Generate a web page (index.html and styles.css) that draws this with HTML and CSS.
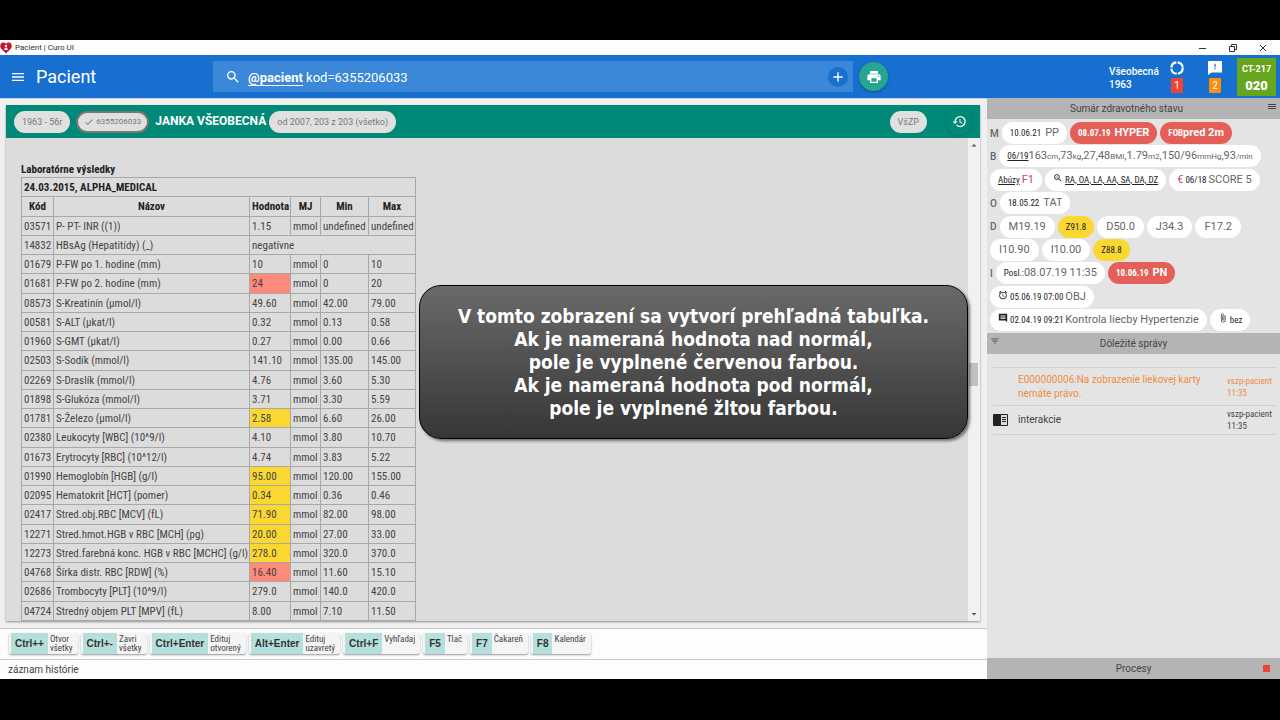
FILE: index.html
```html
<!DOCTYPE html>
<html lang="sk">
<head>
  <meta charset="UTF-8"/>
  <meta name="viewport" content="width=device-width, initial-scale=1.0"/>
  <title>Pacient | Curo UI</title>
  <link rel="stylesheet" href="styles.css">
</head>
<body>
  <div class="window">
    <div class="titlebar">
      <svg class="logo" viewBox="0 0 12 12"><path d="M6 11.6 1 6.4C-.6 4.300.2.8 3.200.6 4.500.5 5.500 1.200 6 2c.5-.8 1.500-1.500 2.800-1.400 3 .2 3.800 3.700 2.200 5.800z" fill="#c2182b"/><circle cx="6" cy="4" r="1.200" fill="#fff"/><path d="M4.300 8c0-3.300 3.400-3.300 3.400 0z" fill="#fff"/></svg>
      <span>Pacient | Curo UI</span>
      <div class="win-buttons">
        <button aria-label="Minimalizovať"><svg viewBox="0 0 10 10"><path d="M1 5.500h7"/></svg></button>
        <button aria-label="Obnoviť"><svg viewBox="0 0 10 10"><path d="M1.500 3.500h5v5h-5zM3.500 3.500v-2h5v5h-2"/></svg></button>
        <button aria-label="Zavrieť"><svg viewBox="0 0 10 10"><path d="m2 2 6 6M8 2 2 8"/></svg></button>
      </div>
    </div>

    <header class="topbar">
      <button class="menu" aria-label="Menu"><svg viewBox="0 0 24 24"><path d="M3 18h18v-2H3v2zm0-5h18v-2H3v2zm0-7v2h18V6H3z"/></svg></button>
      <h1>Pacient</h1>
      <div class="search">
        <svg viewBox="0 0 24 24"><path d="M15.500 14h-.79l-.28-.27A6.470 6.470 0 0 0 16 9.500 6.500 6.500 0 1 0 9.500 16c1.610 0 3.090-.59 4.230-1.570l.27.28v.79l5 4.990L20.490 19l-4.990-5zm-6 0C7.010 14 5 11.990 5 9.500S7.010 5 9.500 5 14 7.010 14 9.500 11.990 14 9.500 14z"/></svg>
        <div class="query" role="textbox" contenteditable="true" aria-label="Hľadať"><b>@pacient</b> kod=6355206033</div>
        <button class="add" aria-label="Pridať"><svg viewBox="0 0 24 24"><path d="M19 13h-6v6h-2v-6H5v-2h6V5h2v6h6v2z"/></svg></button>
      </div>
      <button class="print" aria-label="Tlačiť"><svg viewBox="0 0 24 24"><path d="M19 8H5c-1.660 0-3 1.340-3 3v6h4v4h12v-4h4v-6c0-1.660-1.340-3-3-3zm-3 11H8v-5h8v5zm3-7c-.55 0-1-.45-1-1s.45-1 1-1 1 .45 1 1-.45 1-1 1zm-1-9H6v4h12V3z"/></svg></button>
      <div class="user">
        <div class="who">Všeobecná<br>1963</div>
        <div class="counter">
          <svg viewBox="0 0 16 16"><circle cx="8" cy="8" r="6.500" fill="none" stroke="#fff" stroke-width="2.500" stroke-dasharray="8.710 1.500" /></svg>
          <span class="badge red">1</span>
        </div>
        <div class="counter">
          <svg viewBox="0 0 16 16"><path d="M0 0h16v13H4l-4 3z"/><path d="M7.300 3h1.400v4H7.300zm0 5h1.400v1.500H7.300z" fill="#1770d0"/></svg>
          <span class="badge orange">2</span>
        </div>
        <div class="ticket">CT-217<strong>020</strong></div>
      </div>
    </header>

    <div class="columns">
      <main>
        <div class="panel">
          <div class="patient">
            <button class="tag">1963 - 56r</button>
            <button class="tag active"><svg viewBox="0 0 24 24"><path d="M9 16.170 4.830 12l-1.420 1.410L9 19 21 7l-1.410-1.410z"/></svg>6355206033</button>
            <h2>JANKA VŠEOBECNÁ</h2>
            <button class="tag">od 2007, 203 z 203 (všetko)</button>
            <button class="tag insurer">VšZP</button>
            <button class="history" aria-label="História"><svg viewBox="0 0 24 24"><path d="M13 3a9 9 0 0 0-9 9H1l3.890 3.890.07.14L9 12H6c0-3.870 3.130-7 7-7s7 3.130 7 7-3.130 7-7 7c-1.930 0-3.680-.79-4.940-2.060l-1.420 1.420A8.954 8.954 0 0 0 13 21a9 9 0 0 0 0-18zm-1 5v5l4.280 2.540.72-1.210-3.500-2.080V8H12z"/></svg></button>
          </div>
          <div class="record">
            <div class="results">
              <h3>Laboratórne výsledky</h3>
              <table>
                <colgroup><col class="c-code"><col class="c-name"><col class="c-value"><col class="c-unit"><col class="c-min"><col class="c-max"></colgroup>
                <tr><th class="lab" colspan="6">24.03.2015, ALPHA_MEDICAL</th></tr>
                <tr><th>Kód</th><th>Názov</th><th>Hodnota</th><th>MJ</th><th>Min</th><th>Max</th></tr>
                <tr><td>03571</td><td>P- PT- INR ((1))</td><td>1.15</td><td>mmol</td><td>undefined</td><td>undefined</td></tr>
                <tr><td>14832</td><td>HBsAg (Hepatitídy) (_)</td><td colspan="4">negatívne</td></tr>
                <tr><td>01679</td><td>P-FW po 1. hodine (mm)</td><td>10</td><td>mmol</td><td>0</td><td>10</td></tr>
                <tr><td>01681</td><td>P-FW po 2. hodine (mm)</td><td class="high">24</td><td>mmol</td><td>0</td><td>20</td></tr>
                <tr><td>08573</td><td>S-Kreatinín (µmol/l)</td><td>49.60</td><td>mmol</td><td>42.00</td><td>79.00</td></tr>
                <tr><td>00581</td><td>S-ALT (µkat/l)</td><td>0.32</td><td>mmol</td><td>0.13</td><td>0.58</td></tr>
                <tr><td>01960</td><td>S-GMT (µkat/l)</td><td>0.27</td><td>mmol</td><td>0.00</td><td>0.66</td></tr>
                <tr><td>02503</td><td>S-Sodík (mmol/l)</td><td>141.10</td><td>mmol</td><td>135.00</td><td>145.00</td></tr>
                <tr><td>02269</td><td>S-Draslík (mmol/l)</td><td>4.76</td><td>mmol</td><td>3.60</td><td>5.30</td></tr>
                <tr><td>01898</td><td>S-Glukóza (mmol/l)</td><td>3.71</td><td>mmol</td><td>3.30</td><td>5.59</td></tr>
                <tr><td>01781</td><td>S-Železo (µmol/l)</td><td class="low">2.58</td><td>mmol</td><td>6.60</td><td>26.00</td></tr>
                <tr><td>02380</td><td>Leukocyty [WBC] (10^9/l)</td><td>4.10</td><td>mmol</td><td>3.80</td><td>10.70</td></tr>
                <tr><td>01673</td><td>Erytrocyty [RBC] (10^12/l)</td><td>4.74</td><td>mmol</td><td>3.83</td><td>5.22</td></tr>
                <tr><td>01990</td><td>Hemoglobín [HGB] (g/l)</td><td class="low">95.00</td><td>mmol</td><td>120.00</td><td>155.00</td></tr>
                <tr><td>02095</td><td>Hematokrit [HCT] (pomer)</td><td class="low">0.34</td><td>mmol</td><td>0.36</td><td>0.46</td></tr>
                <tr><td>02417</td><td>Stred.obj.RBC [MCV] (fL)</td><td class="low">71.90</td><td>mmol</td><td>82.00</td><td>98.00</td></tr>
                <tr><td>12271</td><td>Stred.hmot.HGB v RBC [MCH] (pg)</td><td class="low">20.00</td><td>mmol</td><td>27.00</td><td>33.00</td></tr>
                <tr><td>12273</td><td>Stred.farebná konc. HGB v RBC [MCHC] (g/l)</td><td class="low">278.0</td><td>mmol</td><td>320.0</td><td>370.0</td></tr>
                <tr><td>04768</td><td>Šírka distr. RBC [RDW] (%)</td><td class="high">16.40</td><td>mmol</td><td>11.60</td><td>15.10</td></tr>
                <tr><td>02686</td><td>Trombocyty [PLT] (10^9/l)</td><td>279.0</td><td>mmol</td><td>140.0</td><td>420.0</td></tr>
                <tr><td>04724</td><td>Stredný objem PLT [MPV] (fL)</td><td>8.00</td><td>mmol</td><td>7.10</td><td>11.50</td></tr>
              </table>
            </div>
            <div class="scrollbar">
              <svg viewBox="0 0 12 12"><path d="M3.500 7.500h5L6 5z"/></svg>
              <div class="track"><div class="thumb"></div></div>
              <svg viewBox="0 0 12 12"><path d="M3.500 5h5L6 7.500z"/></svg>
            </div>
            <div class="callout">
              V tomto zobrazení sa vytvorí prehľadná tabuľka.<br>
              Ak je nameraná hodnota nad normál,<br>
              pole je vyplnené červenou farbou.<br>
              Ak je nameraná hodnota pod normál,<br>
              pole je vyplnené žltou farbou.
            </div>
          </div>
        </div>

        <div class="hotkeys">
          <button><kbd>Ctrl++</kbd><span>Otvor<br>všetky</span></button>
          <button><kbd>Ctrl+-</kbd><span>Zavri<br>všetky</span></button>
          <button><kbd>Ctrl+Enter</kbd><span>Edituj<br>otvorený</span></button>
          <button><kbd>Alt+Enter</kbd><span>Edituj<br>uzavretý</span></button>
          <button><kbd>Ctrl+F</kbd><span>Vyhľadaj</span></button>
          <button><kbd>F5</kbd><span>Tlač</span></button>
          <button><kbd>F7</kbd><span>Čakareň</span></button>
          <button><kbd>F8</kbd><span>Kalendár</span></button>
        </div>
        <div class="statusline">záznam histórie</div>
      </main>

      <aside>
        <div class="side-head with-grip">Sumár zdravotného stavu
          <svg class="grip" viewBox="0 0 10 8"><path d="M1 1h8v1H1zm0 2h8v1H1zm0 2h8v1H1z"/></svg>
        </div>
        <div class="summary">
          <div class="line"><span class="key">M</span>
            <span class="chip dated"><small>10.06.21</small> PP</span>
            <span class="chip dated red"><small>08.07.19</small> HYPER</span>
            <span class="chip red tight"><small>FOB</small>pred 2m</span></div>
          <div class="line"><span class="key">B</span>
            <span class="chip vitals"><small><u>06/19</u></small>163<i>cm</i>,73<i>kg</i>,27,48<i>BMI</i>,1.79<i>m2</i>,150/96<i>mmHg</i>,93<i>/min</i></span></div>
          <div class="line">
            <span class="chip"><small><u>Abúzy</u></small><em>F1</em></span>
            <span class="chip"><svg viewBox="0 0 24 24"><path d="M15.500 14h-.79l-.28-.27A6.470 6.470 0 0 0 16 9.500 6.500 6.500 0 1 0 9.500 16c1.610 0 3.090-.59 4.230-1.570l.27.28v.79l5 4.990L20.490 19l-4.990-5zm-6 0C7.010 14 5 11.990 5 9.500S7.010 5 9.500 5 14 7.010 14 9.500 11.990 14 9.500 14zM7 9h5v1H7z"/></svg><small><u>RA, OA, LA, AA, SA, DA, DZ</u></small></span>
            <span class="chip"><em class="euro">€</em><small>06/18</small>SCORE 5</span></div>
          <div class="line"><span class="key">O</span>
            <span class="chip dated"><small>18.05.22</small> TAT</span></div>
          <div class="line"><span class="key">D</span>
            <span class="chip code">M19.19</span><span class="chip yellow"><small>Z91.8</small></span><span class="chip code">D50.0</span><span class="chip code">J34.3</span><span class="chip code">F17.2</span></div>
          <div class="line">
            <span class="chip code">I10.90</span><span class="chip code">I10.00</span><span class="chip yellow"><small>Z88.8</small></span></div>
          <div class="line"><span class="key">I</span>
            <span class="chip tight"><small>Posl.:</small>08.07.19 11:35</span>
            <span class="chip dated red"><small>10.06.19</small> PN</span></div>
          <div class="line">
            <span class="chip"><svg viewBox="0 0 24 24"><path d="m22 5.720-4.600-3.860-1.290 1.530 4.600 3.860L22 5.720zM7.880 3.390 6.600 1.860 2 5.710l1.290 1.530 4.590-3.850zM12.500 8H11v6l4.750 2.850.75-1.230-4-2.370V8zM12 4a9 9 0 1 0 0 18 9 9 0 0 0 0-18zm0 16a7 7 0 1 1 0-14 7 7 0 0 1 0 14z"/></svg><small>05.06.19 07:00</small> OBJ</span></div>
          <div class="line">
            <span class="chip"><svg viewBox="0 0 24 24"><path d="M2 2h20v20l-4-4H2zm4 4v2h12V6zm0 3v2h12V9zm0 3v2h12v-2z"/></svg><small>02.04.19 09:21</small> Kontrola liecby Hypertenzie</span>
            <span class="chip"><svg viewBox="0 0 24 24"><path d="M16.500 6v11.500a4 4 0 0 1-8 0V5a2.500 2.500 0 0 1 5 0v10.500a1 1 0 0 1-2 0V6H10v9.500a2.500 2.500 0 0 0 5 0V5a4 4 0 0 0-8 0v12.500a5.500 5.500 0 0 0 11 0V6h-1.500z"/></svg><small>bez</small></span></div>
        </div>
        <div class="side-head">Dôležité správy
          <svg class="filter" viewBox="0 0 24 24"><path d="M10 18h4v-2h-4v2zM3 6v2h18V6H3zm3 7h12v-2H6v2z"/></svg>
        </div>
        <ul class="messages">
          <li class="warn"><span class="ico"></span><p>E000000006:Na zobrazenie liekovej karty nemáte právo.</p><span class="from">vszp-pacient<br>11:35</span></li>
          <li><span class="ico"><svg viewBox="0 0 15 12"><rect width="15" height="12" rx="1" fill="#222"/><path d="M8 1h6v10H8z" fill="#ddd"/><path d="M9 3h4v1H9zm0 2h4v1H9zm0 2h4v1H9z" fill="#222"/></svg></span><p>interakcie</p><span class="from">vszp-pacient<br>11:35</span></li>
        </ul>
        <div class="side-head">Procesy <span class="stop"></span></div>
      </aside>
    </div>
  </div>
</body>
</html>
```
FILE: styles.css
```css
* { box-sizing: border-box; margin: 0; padding: 0; }
:root { --blue: #1770d0; --green: #008977; --grey: #b4b4b4; --red: #e45f58; --yellow: #fbd732; }
body {
  background: #000; color: #444;
  font-family: Roboto, sans-serif; font-size: 11px;
  height: 100vh; padding: 40px 0 41px;
}
button { font: inherit; color: inherit; border: none; background: none; cursor: pointer; }
svg { display: block; fill: currentColor; }
.window { height: 100%; display: flex; flex-direction: column; background: #f0f0f0; overflow: hidden; }

.titlebar {
  height: 15px; flex: none; display: flex; align-items: center; gap: 3px;
  background: #fdfdfd; padding-right: 2px;
  font-size: 8px; color: #333;
}
.logo { width: 12px; height: 12px; }
.win-buttons { margin-left: auto; display: flex; }
.win-buttons button { width: 30px; height: 15px; display: grid; place-items: center; }
.win-buttons svg { width: 10px; height: 10px; fill: none; stroke: #333; }

.topbar {
  height: 43px; flex: none; display: flex; align-items: center;
  background: var(--blue); color: #fff; padding: 0 4px 0 10px;
}
.menu svg { width: 16px; height: 16px; }
.topbar h1 { font-size: 18px; font-weight: 400; width: 177px; margin-left: 10px; }
.search {
  flex: 0 0 calc(50% + 7px); height: 31px; display: flex; align-items: center;
  background: #3a88d7; padding: 0 5px 0 12px;
}
.search > svg { width: 16px; height: 16px; }
.query { flex: 1; margin-left: 7px; padding-top: 2px; font-size: 13px; outline: none; }
.query b { border-bottom: 1px solid #fff; }
.add { width: 20px; height: 20px; border-radius: 50%; background: var(--blue); display: grid; place-items: center; }
.add svg { width: 16px; height: 16px; }
.print {
  width: 29px; height: 29px; margin-left: 6px; border-radius: 50%;
  background: #26a690; display: grid; place-items: center;
  box-shadow: 0 1px 3px rgba(0,0,0,.3);
}
.print svg { width: 16px; height: 16px; }
.user { margin-left: auto; display: flex; align-items: center; }
.who { width: 60px; font-size: 10px; font-weight: 500; line-height: 13px; padding-top: 2px; }
.counter { width: 16px; margin-right: 22px; display: flex; flex-direction: column; align-items: center; gap: 3px; }
.counter svg { width: 14px; height: 14px; }
.badge { width: 12px; height: 15px; border-radius: 1px; font-size: 10px; line-height: 15px; text-align: center; }
.badge.red { background: #f04338; }
.badge.orange { background: #fb8f0c; }
.ticket {
  width: 39px; height: 38px; margin-left: -8px; background: #66a61e;
  font-size: 9px; font-weight: 700; text-align: center; padding-top: 6px;
}
.ticket strong { display: block; font-size: 13px; line-height: 15px; margin-top: 4px; }

.columns { flex: 1; min-height: 0; display: flex; }
main { flex: 1; min-width: 0; display: flex; flex-direction: column; border-top: 1px solid #ccd; }
.panel {
  flex: 1; min-height: 0; margin: 6px 7px 7px 6px; display: flex; flex-direction: column;
  background: #dcdcdc; box-shadow: 0 1px 2px rgba(0,0,0,.4);
}
.patient {
  height: 33px; flex: none; display: flex; align-items: center;
  background: var(--green); padding: 0 8px;
}
.patient h2 { font-size: 12px; color: #fff; margin: 0 3px 2px 6px; }
.tag {
  height: 22px; display: flex; align-items: center; gap: 2px;
  padding: 0 8px; border-radius: 11px; background: #e0e0e0; color: #777; font-size: 9px;
}
.tag.active { margin-left: 6px; padding: 0 6px; border: 2px solid #777; font-size: 8px; }
.tag svg { width: 10px; height: 10px; }
.insurer { margin-left: auto; }
.history {
  width: 26px; height: 26px; margin-left: 19px; border-radius: 50%; color: #fff;
  display: grid; place-items: center; box-shadow: 0 1px 3px rgba(0,0,0,.2);
}
.history svg { width: 15px; height: 15px; }

.record { flex: 1; min-height: 0; display: flex; position: relative; }
.results {
  flex: 1; padding: 25px 0 0 15px; display: flex; flex-direction: column; align-items: flex-start;
  font-family: "Roboto Condensed", "Liberation Sans Narrow", Roboto, sans-serif; font-size: 11px;
}
.results h3 { font-size: 11px; line-height: 14px; color: #222; }
table { width: 394px; flex: 1; table-layout: fixed; border-collapse: collapse; white-space: nowrap; }
th, td { border: 1px solid #a8a8a8; padding: 2px 2px 0; line-height: 16px; text-align: left; }
th { color: #222; text-align: center; }
th.lab { text-align: left; }
.c-code { width: 32px; }
.c-name { width: 196px; }
.c-value { width: 41px; }
.c-unit { width: 30px; }
.c-min { width: 48px; }
.c-max { width: 47px; }
.high { background: #fe8a7c; }
.low { background: var(--yellow); }

.scrollbar { width: 12px; background: #f1f1f1; display: flex; flex-direction: column; color: #555; }
.scrollbar svg { width: 12px; height: 14px; }
.track { flex: 1; padding: 0 2px 0 1px; display: grid; grid-template-rows: 211fr 24fr 221fr; }
.thumb { grid-row: 2; background: #c1c1c1; }
.callout {
  position: absolute; left: 413px; right: 12px; top: 147px; padding: 19px 10px 18px;
  border: 1px solid #000; border-radius: 22px;
  background: linear-gradient(#696969, #585858 35%, #363636);
  box-shadow: 2px 2px 3px rgba(0,0,0,.5);
  color: #fff; text-align: center; white-space: nowrap;
  font: bold 19px/23px "DejaVu Sans Condensed", "Noto Sans", sans-serif;
}

.hotkeys {
  height: 31px; display: flex; align-items: center; gap: 3px; padding: 0 0 2px 9px;
  background: #fdfdfd; border-top: 1px solid #ccc;
}
.hotkeys button {
  height: 21px; display: flex; background: #f4f4f4; border-radius: 2px; padding-left: 2px;
  box-shadow: 0 1px 2px rgba(0,0,0,.4); overflow: hidden;
}
.hotkeys kbd {
  background: #b5dfdd; color: #333; padding: 0 4px;
  font: bold 10px/21px "Liberation Sans", sans-serif;
}
.hotkeys span, .from { font-family: "Roboto Condensed", Roboto, sans-serif; font-size: 9px; }
.hotkeys span { line-height: 9px; text-align: left; padding: 2px 5px 0 2px; }
.statusline { height: 20px; background: #fdfdfd; border-top: 1px solid #ccc; padding-left: 8px; font-size: 10px; line-height: 19px; }

aside { width: 293px; flex: none; display: flex; flex-direction: column; background: #e4e4e4; }
.side-head { height: 21px; flex: none; position: relative; background: var(--grey); font-size: 10px; line-height: 21px; text-align: center; }
.with-grip { padding-right: 14px; }
.grip { position: absolute; right: 3px; top: 5px; width: 10px; height: 8px; }
.filter { position: absolute; left: 3px; top: 3px; width: 10px; height: 10px; }
.stop { position: absolute; right: 10px; top: 7px; width: 7px; height: 7px; background: #f04338; }
.summary { height: 214px; padding: 3px 3px 2px; display: flex; flex-direction: column; justify-content: space-between; }
.line { display: flex; gap: 3px; align-items: center; white-space: nowrap; }
.key { font-size: 10px; font-weight: 500; color: #666; }
.chip {
  height: 22px; line-height: 22px; display: flex; align-items: baseline; gap: 2px;
  background: #fff; border-radius: 11px; padding: 0 8px; color: #666;
}
.chip small { font-family: "Roboto Condensed", Roboto, sans-serif; font-size: 9px; color: #222; }
.chip i { font-size: 8px; font-style: normal; }
.chip em { font-style: normal; color: #d2435a; }
.chip svg { width: 10px; height: 10px; margin-bottom: 1px; color: #222; }
.chip.code { padding: 0 9px; }
.chip.dated { gap: 4px; }
.chip.red { background: var(--red); color: #fff; font-weight: 700; }
.chip.red small { color: #fff; }
.chip.tight, .chip.vitals { gap: 0; }
.chip.yellow { background: var(--yellow); }

.messages { flex: 1; list-style: none; padding: 13px 4px 0 6px; }
.messages li { display: flex; align-items: center; border-top: 1px solid #d0d0d0; min-height: 30px; }
.messages li:last-child { border-bottom: 1px solid #d0d0d0; }
.messages .warn { min-height: 38px; color: #f08c3c; }
.ico { width: 25px; }
.ico svg { width: 15px; height: 12px; }
.messages p { flex: 1; font-size: 10px; line-height: 14px; padding-right: 15px; }
.from { width: 49px; line-height: 12px; }
```
